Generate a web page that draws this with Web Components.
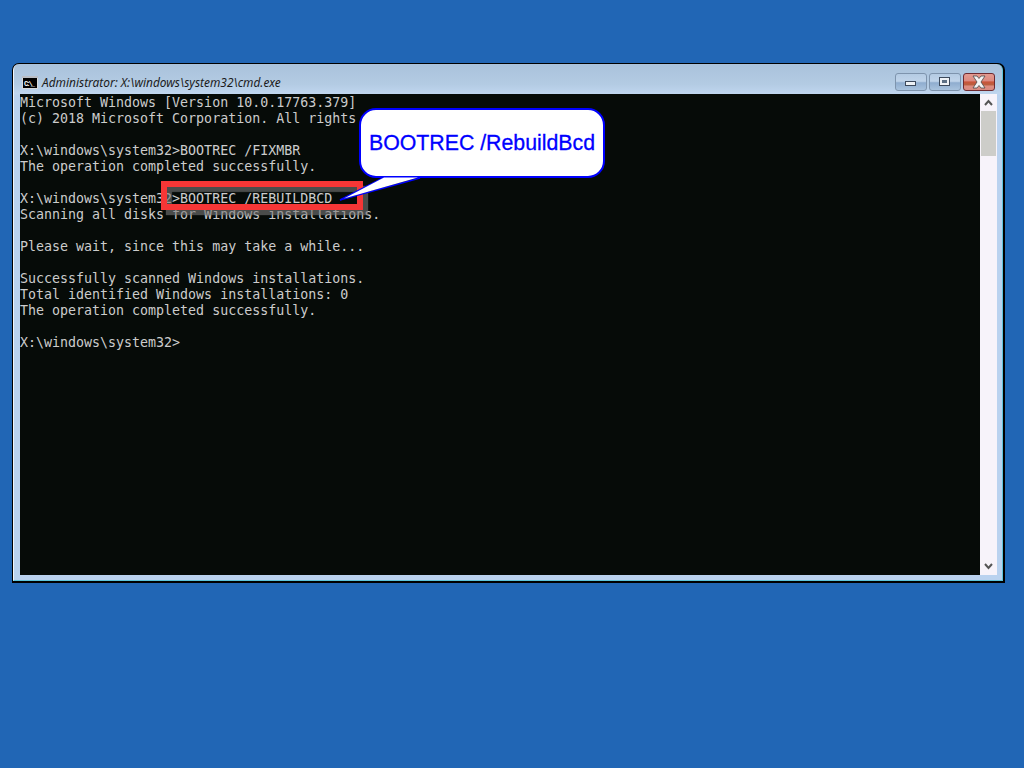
<!DOCTYPE html>
<html>
<head>
<meta charset="utf-8">
<title>cmd</title>
<style>
  html, body { margin: 0; height: 100%; background: #2166b5; overflow: hidden; }
</style>
</head>
<body>
<desk-top>
  <cmd-window title="Administrator: X:\windows\system32\cmd.exe">
<console-view>Microsoft Windows [Version 10.0.17763.379]
(c) 2018 Microsoft Corporation. All rights

X:\windows\system32&gt;BOOTREC /FIXMBR
The operation completed successfully.

X:\windows\system32&gt;BOOTREC /REBUILDBCD
Scanning all disks for Windows installations.

Please wait, since this may take a while...

Successfully scanned Windows installations.
Total identified Windows installations: 0
The operation completed successfully.

X:\windows\system32&gt;</console-view>
  </cmd-window>
  <red-highlight></red-highlight>
  <call-out>BOOTREC /RebuildBcd</call-out>
</desk-top>

<script>
//
// DESKTOP
//
customElements.define(
  "desk-top",
  class extends HTMLElement {
    constructor() {
      super();
      this.attachShadow({ mode: "open" }).innerHTML = `
        <style>
          :host {
            display: block;
            position: relative;
            box-sizing: border-box;
            width: 1024px;
            height: 768px;
            padding: 63px 0 0 12px;
            background: #2166b5;
          }
        </style>
        <slot></slot>
      `;
    }
  }
);

//
// WINDOW CHROME
//
customElements.define(
  "window-button",
  class extends HTMLElement {
    constructor() {
      super();
      const kind = this.getAttribute("kind");
      const glyphs = {
        min: `<svg width="32" height="18" viewBox="0 0 32 18">
                <rect x="10.5" y="8.5" width="10" height="4" fill="#eef2f6" stroke="#3d4a5c"/>
              </svg>`,
        max: `<svg width="32" height="18" viewBox="0 0 32 18">
                <rect x="10.5" y="4.5" width="10" height="8" fill="#eef2f6" stroke="#3d4a5c"/>
                <rect x="13" y="7" width="5" height="3" fill="#5d7085"/>
              </svg>`,
        close: `<svg width="32" height="18" viewBox="0 0 32 18">
                <path d="M10 3h4l2 2.5L18 3h4l-4 6 4 6h-4l-2-2.5-2 2.5h-4l4-6z" fill="#f4f4f4" stroke="#4a4a4a" stroke-width=".8"/>
              </svg>`
      };
      this.attachShadow({ mode: "open" }).innerHTML = `
        <style>
          :host {
            display: block;
            width: 32px;
            height: 18px;
            box-sizing: border-box;
            position: relative;
            border: 1px solid #7e94ad;
            border-radius: 3px;
            overflow: hidden;
            background: linear-gradient(#b4cbe3 0%, #c0d4ea 45%, #8fadcf 55%, #a9c3de 100%);
          }
          :host([kind="close"]) {
            border-color: #6e2a30;
            background: linear-gradient(#e39a90 0%, #dc8a80 42%, #c9543a 50%, #b9603f 68%, #de8d82 75%, #d98a80 100%);
          }
          svg { position: absolute; left: -1px; top: -1px; display: block; }
        </style>
        ${glyphs[kind]}
      `;
    }
  }
);

customElements.define(
  "title-bar",
  class extends HTMLElement {
    constructor() {
      super();
      this.attachShadow({ mode: "open" }).innerHTML = `
        <style>
          :host {
            display: flex;
            align-items: center;
            height: 30px;
            box-sizing: border-box;
            padding: 8px 7px 2px 8px;
          }
          .icon { flex: none; width: 16px; height: 13px; margin-right: 4px; display: block; }
          .caption {
            flex: 1;
            font: italic 11.9px "Noto Sans", sans-serif;
            color: #1b1b1b;
            white-space: nowrap;
          }
          .buttons { display: flex; gap: 2px; }
        </style>
        <svg class="icon" viewBox="0 0 16 13">
          <rect width="16" height="13" fill="#d8d8d8"/>
          <rect x="0" y="0" width="16" height="2" fill="#b9bdc4"/>
          <rect x="1" y="2" width="14" height="10" fill="#000"/>
          <text x="2" y="10" font-family="Liberation Mono" font-weight="700" font-size="7" fill="#fff" textLength="11">C:\\_</text>
        </svg>
        <span class="caption"><slot></slot></span>
        <div class="buttons">
          <window-button kind="min"></window-button>
          <window-button kind="max"></window-button>
          <window-button kind="close"></window-button>
        </div>
      `;
    }
  }
);

customElements.define(
  "scroll-bar",
  class extends HTMLElement {
    constructor() {
      super();
      this.attachShadow({ mode: "open" }).innerHTML = `
        <style>
          :host {
            display: flex;
            flex-direction: column;
            flex: none;
            width: 17px;
            background: #f7f3fa;
          }
          .arrow { flex: none; height: 17px; display: block; }
          .thumb { flex: none; height: 45px; margin: 0 1px; background: #cdcdc9; }
          .track { flex: 1; }
        </style>
        <svg class="arrow" width="17" height="17" viewBox="0 0 17 17">
          <path d="M5 11l3.5-4 3.5 4" fill="none" stroke="#555" stroke-width="2"/>
        </svg>
        <div class="thumb"></div>
        <div class="track"></div>
        <svg class="arrow" width="17" height="17" viewBox="0 0 17 17">
          <path d="M5 6l3.5 4 3.5-4" fill="none" stroke="#555" stroke-width="2"/>
        </svg>
      `;
    }
  }
);

customElements.define(
  "cmd-window",
  class extends HTMLElement {
    constructor() {
      super();
      const title = this.getAttribute("title");
      this.removeAttribute("title");
      this.attachShadow({ mode: "open" }).innerHTML = `
        <style>
          :host {
            display: block;
            box-sizing: border-box;
            width: 993px;
            height: 520px;
            background: #000;
            border-radius: 7px 7px 0 0;
            padding: 1px 2px 2px 1px;
          }
          .frame {
            height: 100%;
            box-sizing: border-box;
            display: flex;
            flex-direction: column;
            border-radius: 6px 6px 0 0;
            background: linear-gradient(#a9c2db 0, #b3cbe3 20px, #c0d6ef 30px, #bad2ef 31px);
            border-left: 1px solid #f2f6fa;
            border-bottom: 1px solid #5fc4dc;
            border-right: 1px solid #5fc4dc;
          }
          .body { flex: 1; display: flex; margin: 0 5px 5px 6px; min-height: 0; }
        </style>
        <div class="frame">
          <title-bar>${title}</title-bar>
          <div class="body">
            <slot></slot>
            <scroll-bar></scroll-bar>
          </div>
        </div>
      `;
    }
  }
);

//
// CONSOLE
//
customElements.define(
  "console-view",
  class extends HTMLElement {
    constructor() {
      super();
      this.attachShadow({ mode: "open" }).innerHTML = `
        <style>
          :host {
            display: block;
            flex: 1;
            min-width: 0;
            box-sizing: border-box;
            padding-top: 1px;
            background: #060b08;
            color: #cccccc;
            font: 13.3px/16px "DejaVu Sans Mono", "Liberation Mono", monospace;
            overflow: hidden;
          }
          .text { white-space: pre; }
        </style>
        <div class="text"><slot></slot></div>
      `;
    }
  }
);

//
// ANNOTATIONS, these sit on top of the window
//
customElements.define(
  "red-highlight",
  class extends HTMLElement {
    constructor() {
      super();
      this.attachShadow({ mode: "open" }).innerHTML = `
        <style>
          :host {
            position: absolute;
            left: 161px;
            top: 181px;
            width: 202px;
            height: 29px;
            box-sizing: border-box;
            border: 6px solid #f63636;
            box-shadow: 5px 5px 1px rgba(120,120,120,.6), inset 5px 5px 1px rgba(120,120,120,.6);
          }
        </style>
      `;
    }
  }
);

customElements.define(
  "call-out",
  class extends HTMLElement {
    constructor() {
      super();
      this.attachShadow({ mode: "open" }).innerHTML = `
        <style>
          :host {
            position: absolute;
            left: 359px;
            top: 108px;
            width: 246px;
            height: 70px;
            box-sizing: border-box;
            border: 2px solid #0000ff;
            border-radius: 17px;
            background: #fff;
            display: flex;
            align-items: center;
            justify-content: center;
            color: #0000ff;
            font: 21.3px "Liberation Sans", sans-serif;
            -webkit-text-stroke: .3px #0000ff;
            white-space: nowrap;
          }
          svg { position: absolute; left: -21px; top: 65px; overflow: visible; }
          span { position: relative; }
        </style>
        <svg width="80" height="30" viewBox="0 0 80 30">
          <path d="M0 25L43 3" fill="none" stroke="#0000ff" stroke-width="1.5"/>
          <path d="M0 25L80 3" fill="none" stroke="#0000ff" stroke-width="1.5"/>
          <path d="M4 23.5L44 2.5h34z" fill="#fff"/>
        </svg>
        <span><slot></slot></span>
      `;
    }
  }
);
</script>
</body>
</html>
